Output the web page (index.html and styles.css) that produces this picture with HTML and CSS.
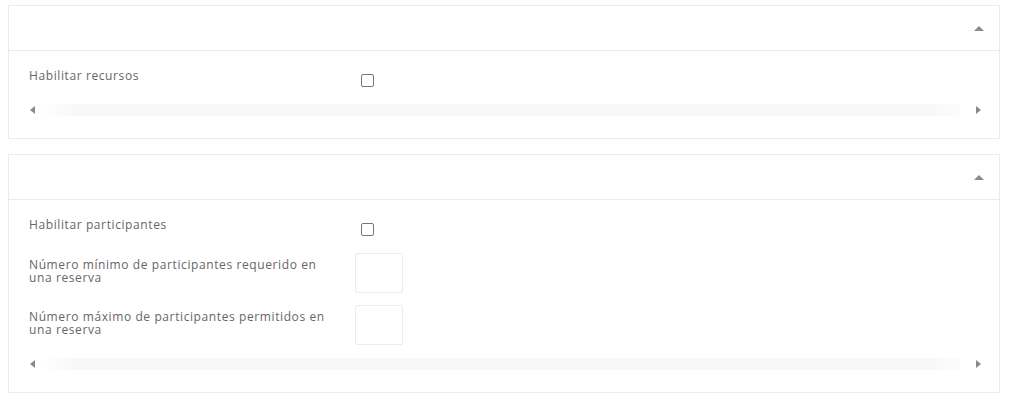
FILE: index.html
```html
<!DOCTYPE html>
<html lang="es">
<head>
<meta charset="utf-8">
<title>Configuración</title>
<link rel="stylesheet" href="styles.css">
</head>
<body>
<div class="page">
  <section class="card">
    <header class="card-head">
      <span class="chev-up"></span>
    </header>
    <div class="card-body">
      <div class="row row-check">
        <label class="lbl">Habilitar recursos</label>
        <div class="ctl"><span class="cb"></span></div>
      </div>
      <div class="hscroll">
        <span class="arr-l"></span>
        <span class="track"></span>
        <span class="arr-r"></span>
      </div>
    </div>
  </section>

  <section class="card">
    <header class="card-head">
      <span class="chev-up"></span>
    </header>
    <div class="card-body">
      <div class="row row-check">
        <label class="lbl">Habilitar participantes</label>
        <div class="ctl"><span class="cb"></span></div>
      </div>
      <div class="row row-input">
        <label class="lbl">Número mínimo de participantes requerido en una reserva</label>
        <div class="ctl"><span class="num"></span></div>
      </div>
      <div class="row row-input">
        <label class="lbl">Número máximo de participantes permitidos en una reserva</label>
        <div class="ctl"><span class="num"></span></div>
      </div>
      <div class="hscroll">
        <span class="arr-l"></span>
        <span class="track"></span>
        <span class="arr-r"></span>
      </div>
    </div>
  </section>
</div>
</body>
</html>
```

FILE: styles.css
```css
html, body {
  margin: 0;
  padding: 0;
  background: #ffffff;
}

body {
  font-family: "Open Sans", "Liberation Sans", sans-serif;
  font-size: 12px;
  letter-spacing: 0.6px;
  color: #666666;
}

.page {
  padding: 5px 24px 0 8px;
  display: flex;
  flex-direction: column;
  gap: 15px;
}

.card {
  border: 1px solid #ebebeb;
  background: #fff;
}

.card-head {
  height: 44px;
  border-bottom: 1px solid #ebebeb;
  display: flex;
  align-items: center;
  justify-content: flex-end;
  padding-right: 15px;
}

.chev-up {
  width: 0;
  height: 0;
  border-left: 5px solid transparent;
  border-right: 5px solid transparent;
  border-bottom: 5px solid #8a8a8a;
  margin-top: 1px;
}

.card-body {
  padding: 17px 18px 22px 20px;
  display: flex;
  flex-direction: column;
}

.row {
  display: flex;
  align-items: flex-start;
}

.lbl {
  width: 326px;
  line-height: 14px;
  box-sizing: border-box;
  padding-right: 20px;
}

.ctl {
  display: flex;
}

.row-check {
  height: 36px;
}

.row-check .lbl {
  padding-top: 1px;
}

.cb {
  width: 11px;
  height: 11px;
  border: 1px solid #767676;
  border-radius: 2px;
  margin: 6px 0 0 6px;
}

.row-input {
  height: 52px;
}

.row-input .lbl {
  line-height: 13px;
  padding-top: 5px;
}

.num {
  width: 46px;
  height: 38px;
  border: 1px solid #ececec;
  border-radius: 2px;
}

.hscroll {
  display: flex;
  align-items: center;
  height: 12px;
}

.row-input + .hscroll {
  margin-top: 1px;
}

.arr-l {
  width: 0;
  height: 0;
  border-top: 4px solid transparent;
  border-bottom: 4px solid transparent;
  border-right: 5px solid #8a8a8a;
  margin-left: 1px;
}

.track {
  flex: 1;
  height: 12px;
  margin: 0 16px 0 8px;
  background: linear-gradient(to right, #ffffff 0, #f8f8f8 30px, #f8f8f8 calc(100% - 30px), #fcfcfc 100%);
}

.arr-r {
  width: 0;
  height: 0;
  border-top: 4px solid transparent;
  border-bottom: 4px solid transparent;
  border-left: 5px solid #8a8a8a;
}
```
